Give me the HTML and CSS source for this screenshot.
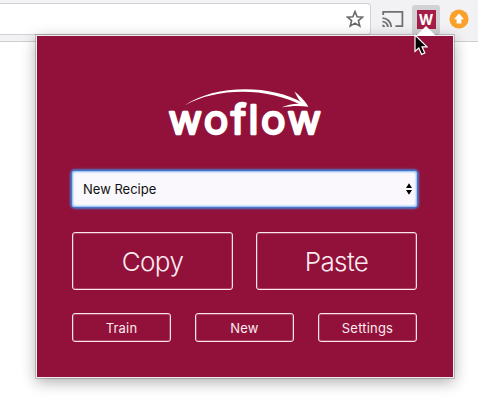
FILE: index.html
```html
<!DOCTYPE html>
<html lang="en">
<head>
<meta charset="utf-8">
<title>woflow</title>
<link rel="stylesheet" href="styles.css">
</head>
<body>
<header class="toolbar">
  <div class="address">
    <svg class="star" width="18" height="18" viewBox="0 0 18 18"><path d="M9 1.500l2.100 5.200 5.500.400-4.200 3.500 1.400 5.500L9 13.100l-4.800 3 1.400-5.500-4.200-3.500 5.500-.400z" fill="none" stroke="#69696d" stroke-width="1.600"/></svg>
  </div>
  <svg class="cast" width="22" height="18" viewBox="0 0 22 18" fill="none" stroke="#707074" stroke-width="1.800"><path d="M1.200 5V1.800h19.200v14.400h-7M.5 8.200a8.700 8.700 0 0 1 8.700 8.700M.5 11.600a5.300 5.300 0 0 1 5.300 5.300"/><path d="M.5 14.500a2.500 2.500 0 0 1 2.500 2.500H.5z" fill="#707074" stroke="none"/></svg>
  <div class="extension"><span class="badge">W</span></div>
  <svg class="update" width="20" height="20" viewBox="0 0 20 20"><circle cx="10" cy="10" r="9.600" fill="#f9a12b"/><path d="M10 4.500l5 5.700h-2.600v4.200H7.600v-4.200H5z" fill="#fff"/></svg>
</header>
<main class="popup">
  <svg class="logo" width="160" height="52" viewBox="0 0 160 52" role="img">
    <text class="wordmark" x="3.500" y="47.500" textLength="155" lengthAdjust="spacingAndGlyphs">woflow</text>
    <path d="M19.500 19.500C48-1 105-2.500 138 17L137 19.500C103 1.500 52 1 19.500 19.500z" fill="#fff"/>
    <path d="M129.500 5.500C134 9 139.500 14 143.500 20.800C135 19.600 126 19.800 116.500 21.600C122 18.300 130 17.300 137 17.800C134 14 131.500 10 129.500 5.500z" fill="#fff"/>
  </svg>
  <div class="select">
    <span>New Recipe</span>
    <svg width="6" height="12" viewBox="0 0 6 12"><path d="M0 5L3 .2 6 5zM0 7l3 4.800L6 7z"/></svg>
  </div>
  <div class="row main-actions"><button>Copy</button><button>Paste</button></div>
  <div class="row minor-actions"><button>Train</button><button>New</button><button>Settings</button></div>
</main>
<svg class="arrow" width="20" height="10" viewBox="0 0 20 10"><path d="M0 10L10 0l10 10z" fill="#fff"/></svg>
<svg class="cursor" width="14" height="22" viewBox="0 0 14 22"><path d="M1 1v16.500l3.800-3.500 2.800 6.400 3.200-1.400-2.800-6.200h5z" fill="#000" stroke="#fff" stroke-width="1.200"/></svg>
</body>
</html>
```
FILE: styles.css
```css
* { box-sizing: border-box; }

body {
  margin: 0;
  height: 412px;
  overflow: hidden;
  background: #fff;
  font-family: Inter, "Liberation Sans", sans-serif;
}

.toolbar {
  display: flex;
  align-items: flex-start;
  height: 42px;
  background: #f2f1f3;
  border-bottom: 1px solid #cfced0;
}

.address {
  display: flex;
  justify-content: flex-end;
  width: 371px;
  height: 32px;
  margin-top: 3px;
  padding: 6px 6px 0 0;
  background: #fff;
  border: 1px solid #d2d2d4;
  border-left: 0;
  border-radius: 0 4px 4px 0;
}

.cast { margin: 10px 0 0 11px; }

.extension {
  display: flex;
  justify-content: center;
  width: 28px;
  height: 30px;
  margin: 5px 0 0 8px;
  padding-top: 5px;
  background: #d2d1d3;
  border-radius: 3px;
}

.badge {
  width: 19px;
  height: 19px;
  background: #a51e48;
  color: #fff;
  font-size: 14px;
  font-weight: 700;
  line-height: 19px;
  text-align: center;
}

.update { margin: 9px 0 0 9px; }

.popup {
  position: absolute;
  left: 36px;
  top: 35px;
  width: 418px;
  height: 343px;
  padding: 50px 36px 0 35px;
  background: #92113a;
  border: 1px solid #f4edf0;
  box-shadow: 0 0 0 1px rgba(0, 0, 0, .18), 0 4px 14px rgba(0, 0, 0, .32);
}

.logo { display: block; margin: 0 auto; overflow: visible; }

.wordmark {
  fill: #fff;
  stroke: #fff;
  stroke-width: 2.4;
  stroke-linejoin: round;
  font-size: 40px;
  font-weight: 400;
  letter-spacing: 2.5px;
}

.select {
  display: flex;
  align-items: center;
  justify-content: space-between;
  height: 36px;
  margin-top: 33px;
  padding: 0 5px 0 11px;
  background: #faf8fc;
  border-radius: 3px;
  box-shadow: inset 0 0 2px 1px #82b8f2, 0 0 2px 2px #4a78cc;
  color: #111;
  font-size: 13px;
}

.row { display: flex; }

.row button {
  flex: 1;
  padding: 0;
  background: none;
  border: 1px solid #fbe6ed;
  border-radius: 3px;
  box-shadow: inset 0 0 0 1px rgba(255, 220, 232, .25);
  color: #fbeaf0;
  font-family: inherit;
}

.main-actions { gap: 23px; margin-top: 25px; }
.main-actions button { height: 58px; font-size: 26px; font-weight: 350; letter-spacing: -.6px; }
.minor-actions { gap: 24px; margin-top: 23px; }
.minor-actions button { height: 29px; font-size: 13px; letter-spacing: .2px; }

.arrow { position: absolute; left: 416px; top: 26px; }
.cursor { position: absolute; left: 414px; top: 34px; }
```
